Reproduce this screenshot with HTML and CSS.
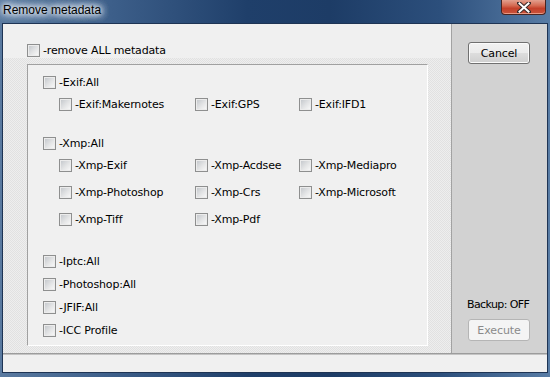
FILE: index.html
```html
<!DOCTYPE html>
<html lang="en">

<head>
    <meta charset="UTF-8">
    <meta name="viewport" content="width=device-width, initial-scale=1.0">
    <title>Remove metadata</title>
    <link rel="stylesheet" href="styles.css">
</head>

<body>
    <div class="window">
        <div class="titlebar">
            <span class="title">Remove metadata</span>
            <span class="close">
                <svg width="14" height="11" viewBox="0 0 14 11">
                    <path d="M2 1 L12 10 M12 1 L2 10" stroke="#3a2a2a" stroke-width="4" stroke-linecap="square" />
                    <path d="M2.5 1.5 L11.5 9.5 M11.5 1.5 L2.5 9.5" stroke="#fff" stroke-width="2" stroke-linecap="square" />
                </svg>
            </span>
        </div>

        <div class="client">
            <div class="main">
                <div class="left">
                    <div class="top-row">
                        <label class="opt"><span class="cb"></span>-remove ALL metadata</label>
                    </div>
                    <div class="well">
                        <div class="panel">
                            <!-- Exif -->
                            <label class="opt"><span class="cb"></span>-Exif:All</label>
                            <div class="sub">
                                <label class="opt"><span class="cb"></span>-Exif:Makernotes</label>
                                <label class="opt"><span class="cb"></span>-Exif:GPS</label>
                                <label class="opt"><span class="cb"></span>-Exif:IFD1</label>
                            </div>

                            <!-- Xmp -->
                            <label class="opt xmp"><span class="cb"></span>-Xmp:All</label>
                            <div class="sub">
                                <label class="opt"><span class="cb"></span>-Xmp-Exif</label>
                                <label class="opt"><span class="cb"></span>-Xmp-Acdsee</label>
                                <label class="opt"><span class="cb"></span>-Xmp-Mediapro</label>
                                <label class="opt"><span class="cb"></span>-Xmp-Photoshop</label>
                                <label class="opt"><span class="cb"></span>-Xmp-Crs</label>
                                <label class="opt"><span class="cb"></span>-Xmp-Microsoft</label>
                                <label class="opt"><span class="cb"></span>-Xmp-Tiff</label>
                                <label class="opt"><span class="cb"></span>-Xmp-Pdf</label>
                            </div>

                            <!-- resto -->
                            <div class="flat">
                                <label class="opt"><span class="cb"></span>-Iptc:All</label>
                                <label class="opt"><span class="cb"></span>-Photoshop:All</label>
                                <label class="opt"><span class="cb"></span>-JFIF:All</label>
                                <label class="opt"><span class="cb"></span>-ICC Profile</label>
                            </div>
                        </div>
                    </div>
                </div>

                <div class="side">
                    <button class="btn">Cancel</button>
                    <div class="side-bottom">
                        <div class="backup">Backup: OFF</div>
                        <button class="btn" disabled>Execute</button>
                    </div>
                </div>
            </div>
            <div class="status"></div>
        </div>
    </div>
</body>

</html>
```

FILE: styles.css
```css
body {
    margin: 0;
    font-family: "DejaVu Sans", sans-serif;
    font-size: 11px;
    color: #000;
}

.window {
    width: 550px;
    height: 377px;
    display: flex;
    flex-direction: column;
    background: linear-gradient(90deg, #5a7aa0 0%, #3d5f8a 20%, #1f3f6a 45%, #1d3c66 60%, #2c4f7c 80%, #587ca5 100%);
}

/* barra de titulo */
.titlebar {
    height: 23px;
    display: flex;
    align-items: flex-start;
}

.title {
    font-family: "Liberation Sans", sans-serif;
    font-size: 12px;
    line-height: 21px;
    padding-left: 3px;
    color: #000;
    text-shadow: 0 0 8px #dde5ee, 0 0 8px #dde5ee, 0 0 8px #dde5ee, 0 0 8px #dde5ee, 0 0 4px #eef2f6;
}

.close {
    margin-left: auto;
    margin-right: 4px;
    width: 45px;
    height: 15px;
    box-sizing: border-box;
    border: 1px solid #4a2420;
    border-top: none;
    border-radius: 0 0 4px 4px;
    background: linear-gradient(#e3a08f 0%, #d56a52 40%, #c4402a 60%, #c9533b 100%);
    box-shadow: inset 0 -1px 0 rgba(255, 200, 180, 0.6);
    display: flex;
    align-items: center;
    justify-content: center;
}

/* area cliente */
.client {
    flex: 1;
    margin: 0 2px 4px 2px;
    border: 1px solid #1e3454;
    background: #f0f0f0;
    display: flex;
    flex-direction: column;
}

.main {
    height: 329px;
    display: flex;
}

.left {
    width: 448px;
    display: flex;
    flex-direction: column;
}

.top-row {
    height: 34px;
    box-sizing: border-box;
    padding: 20px 0 0 24px;
}

.well {
    flex: 1;
    padding: 6px 23px 7px 24px;
    background: repeating-conic-gradient(#e1e1e1 0 25%, #eeeeee 0 50%) 0 0 / 2px 2px;
}

.panel {
    height: 100%;
    box-sizing: border-box;
    background: #f0f0f0;
    border-top: 1px solid #a0a0a0;
    border-left: 1px solid #a0a0a0;
    border-bottom: 1px solid #fff;
    border-right: 1px solid #fff;
    padding: 11px 0 0 15px;
}

.opt {
    display: flex;
    align-items: center;
    height: 13px;
    line-height: 13px;
    letter-spacing: -0.15px;
    white-space: nowrap;
}

.cb {
    width: 13px;
    height: 13px;
    box-sizing: border-box;
    flex: none;
    margin-right: 3px;
    border: 1px solid #8e8f8f;
    background: linear-gradient(135deg, #c0c4c9 0%, #e4e5e6 55%, #fbfbfb 100%);
    box-shadow: inset 0 0 0 1px #ececec;
}

.sub {
    margin-top: 9px;
    padding-left: 16px;
    display: grid;
    grid-template-columns: 136px 104px auto;
    row-gap: 14px;
}

.opt.xmp {
    margin-top: 26px;
}

.flat {
    margin-top: 29px;
    display: flex;
    flex-direction: column;
    gap: 10px;
}

/* panel derecho */
.side {
    flex: 1;
    border-left: 1px solid #a2a2a2;
    background: #d2d2d2;
    padding: 18px 0 12px 16px;
    display: flex;
    flex-direction: column;
    align-items: flex-start;
}

.side-bottom {
    margin-top: auto;
}

.backup {
    height: 14px;
    line-height: 14px;
    margin: 0 0 7px -1px;
    letter-spacing: -0.6px;
}

.btn {
    width: 62px;
    height: 22px;
    padding: 0;
    font-family: "DejaVu Sans", sans-serif;
    font-size: 11px;
    letter-spacing: -0.1px;
    color: #000;
    border: 1px solid #707070;
    border-radius: 3px;
    background: linear-gradient(#f2f2f2 0%, #ebebeb 50%, #dddddd 51%, #cfcfcf 100%);
    box-shadow: inset 0 0 0 1px #fbfbfb;
}

.btn:disabled {
    color: #8a8a8a;
    border-color: #b5b5b5;
    background: #f4f4f4;
    box-shadow: none;
}

.status {
    flex: 1;
    border-top: 1px solid #9c9c9c;
    box-shadow: inset 0 1px 0 #c4c4c4;
    background: #f0f0f0;
}
```
